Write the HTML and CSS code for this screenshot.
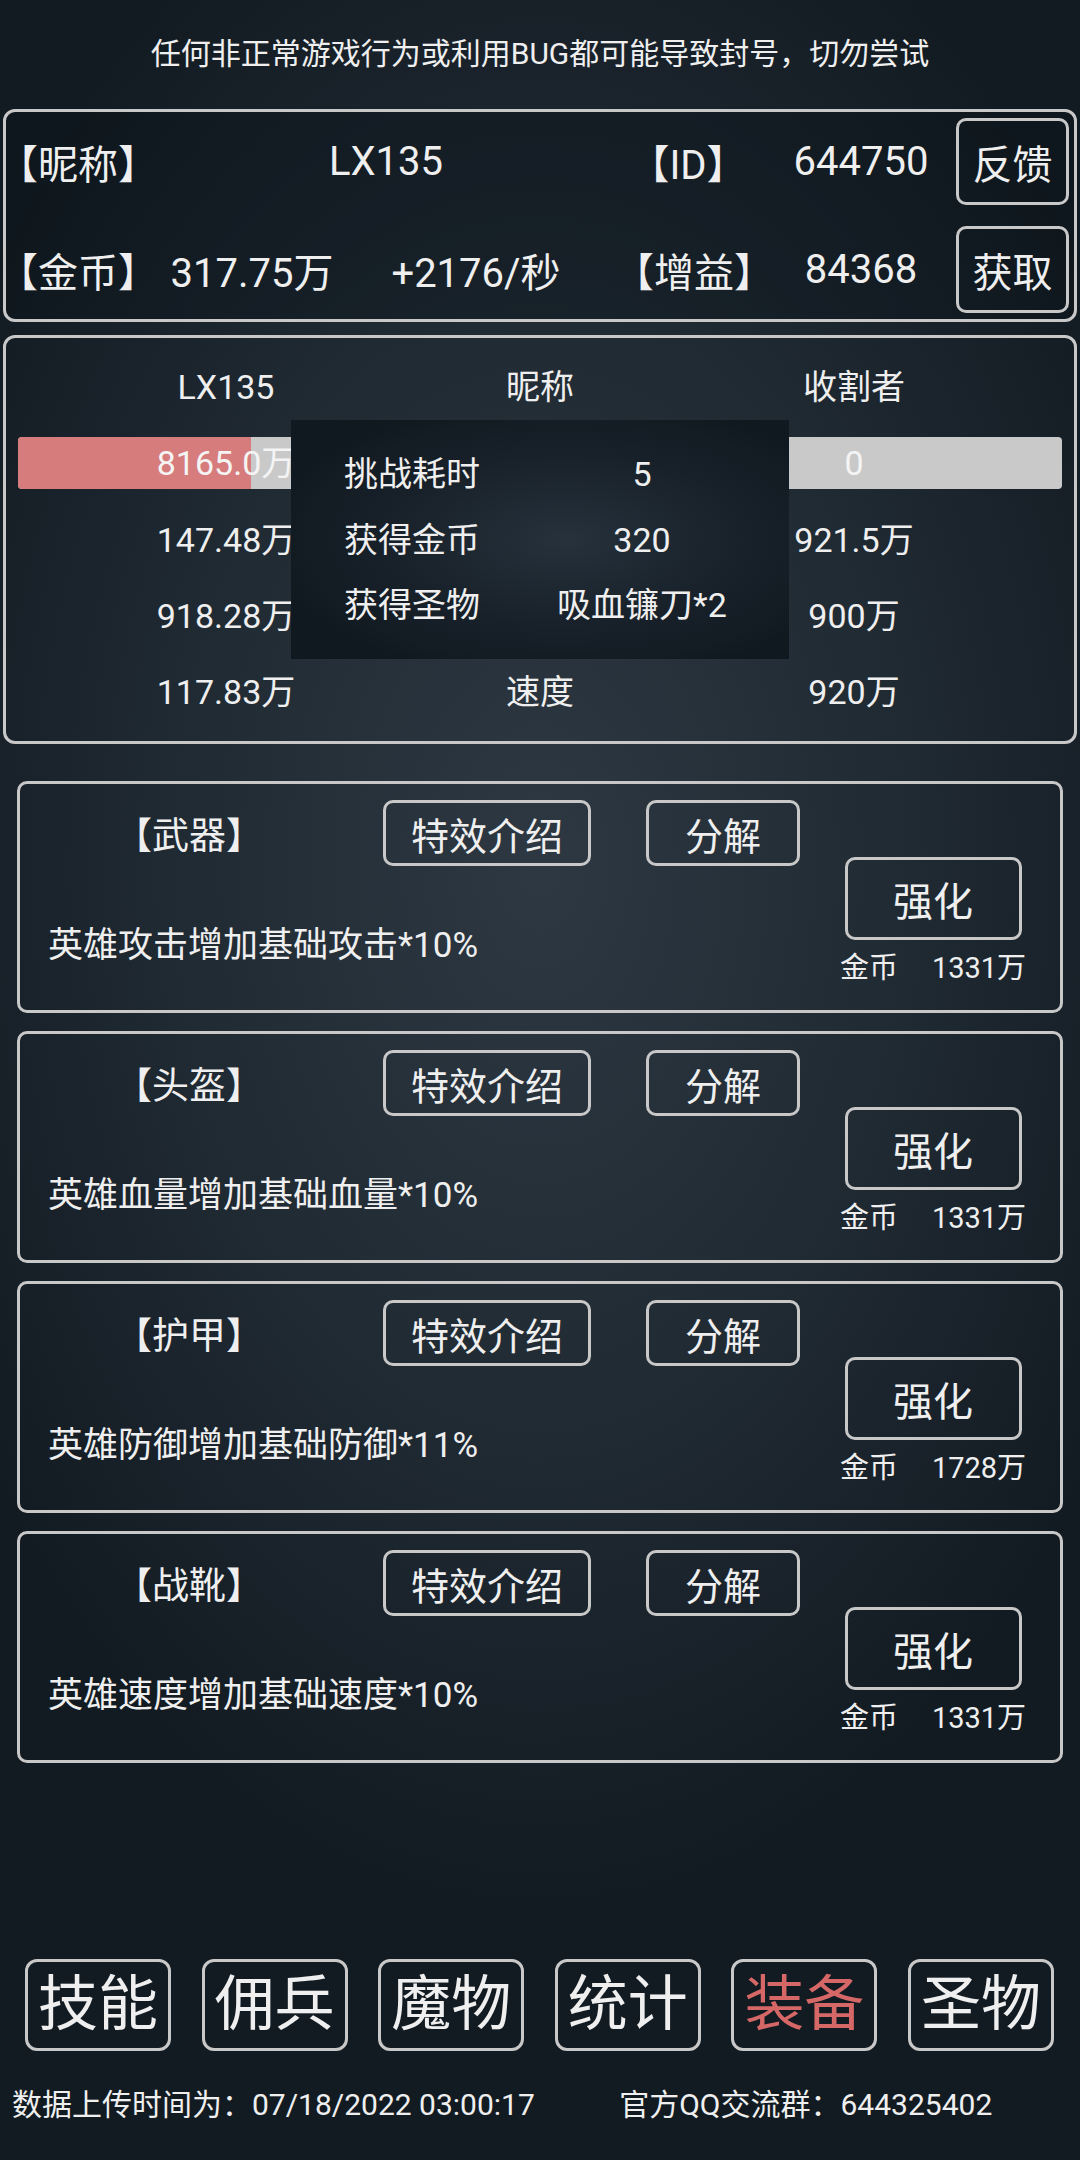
FILE: index.html
```html
<!DOCTYPE html>
<html lang="zh-CN">
<head>
  <meta charset="UTF-8" />
  <meta name="viewport" content="width=device-width, initial-scale=1" />
  <title>装备</title>
  <link rel="stylesheet" href="styles.css">
</head>
<body>
  <div class="notice">任何非正常游戏行为或利用BUG都可能导致封号，切勿尝试</div>

  <div class="panel info">
    <div class="info-row">
      <div class="cell c-label">【昵称】</div>
      <div class="cell c-name">LX135</div>
      <div class="cell c-idl">【ID】</div>
      <div class="cell c-id">644750</div>
      <button class="btn small-btn" type="button">反馈</button>
    </div>
    <div class="info-row">
      <div class="cell c-label">【金币】</div>
      <div class="cell c-gold">317.75万</div>
      <div class="cell c-rate">+2176/秒</div>
      <div class="cell c-buffl">【增益】</div>
      <div class="cell c-buff">84368</div>
      <button class="btn small-btn" type="button">获取</button>
    </div>
  </div>

  <div class="panel battle">
    <div class="battle-grid">
      <div class="b-head">LX135</div>
      <div class="b-head">昵称</div>
      <div class="b-head">收割者</div>

      <div class="hp-bar"><div class="hp-fill" style="width: 56%"></div><span>8165.0万</span></div>
      <div></div>
      <div class="hp-bar"><span>0</span></div>

      <div class="b-cell">147.48万</div>
      <div class="b-cell"></div>
      <div class="b-cell">921.5万</div>

      <div class="b-cell">918.28万</div>
      <div class="b-cell"></div>
      <div class="b-cell">900万</div>

      <div class="b-cell">117.83万</div>
      <div class="b-cell">速度</div>
      <div class="b-cell">920万</div>
    </div>

    <div class="result">
      <div class="r-label">挑战耗时</div><div class="r-value">5</div>
      <div class="r-label">获得金币</div><div class="r-value">320</div>
      <div class="r-label">获得圣物</div><div class="r-value">吸血镰刀*2</div>
    </div>
  </div>

  <div class="cards">
    <div class="card">
      <div class="card-main">
        <div class="card-head">
          <div class="card-title">【武器】</div>
          <button class="btn btn-intro" type="button">特效介绍</button>
          <button class="btn btn-split" type="button">分解</button>
        </div>
        <div class="card-desc">英雄攻击增加基础攻击*10%</div>
      </div>
      <div class="card-side">
        <button class="btn btn-up" type="button">强化</button>
        <div class="cost"><span>金币</span><span>1331万</span></div>
      </div>
    </div>

    <div class="card">
      <div class="card-main">
        <div class="card-head">
          <div class="card-title">【头盔】</div>
          <button class="btn btn-intro" type="button">特效介绍</button>
          <button class="btn btn-split" type="button">分解</button>
        </div>
        <div class="card-desc">英雄血量增加基础血量*10%</div>
      </div>
      <div class="card-side">
        <button class="btn btn-up" type="button">强化</button>
        <div class="cost"><span>金币</span><span>1331万</span></div>
      </div>
    </div>

    <div class="card">
      <div class="card-main">
        <div class="card-head">
          <div class="card-title">【护甲】</div>
          <button class="btn btn-intro" type="button">特效介绍</button>
          <button class="btn btn-split" type="button">分解</button>
        </div>
        <div class="card-desc">英雄防御增加基础防御*11%</div>
      </div>
      <div class="card-side">
        <button class="btn btn-up" type="button">强化</button>
        <div class="cost"><span>金币</span><span>1728万</span></div>
      </div>
    </div>

    <div class="card">
      <div class="card-main">
        <div class="card-head">
          <div class="card-title">【战靴】</div>
          <button class="btn btn-intro" type="button">特效介绍</button>
          <button class="btn btn-split" type="button">分解</button>
        </div>
        <div class="card-desc">英雄速度增加基础速度*10%</div>
      </div>
      <div class="card-side">
        <button class="btn btn-up" type="button">强化</button>
        <div class="cost"><span>金币</span><span>1331万</span></div>
      </div>
    </div>
  </div>

  <nav class="nav">
    <button class="btn nav-btn" type="button">技能</button>
    <button class="btn nav-btn" type="button">佣兵</button>
    <button class="btn nav-btn" type="button">魔物</button>
    <button class="btn nav-btn" type="button">统计</button>
    <button class="btn nav-btn active" type="button">装备</button>
    <button class="btn nav-btn" type="button">圣物</button>
  </nav>

  <div class="footer">
    <span>数据上传时间为：07/18/2022 03:00:17</span>
    <span class="qq">官方QQ交流群：644325402</span>
  </div>
</body>
</html>
```

FILE: styles.css
```css
* {
  box-sizing: border-box;
}

html, body {
  margin: 0;
  padding: 0;
}

body {
  width: 1080px;
  min-height: 2160px;
  font-family: Roboto, "Noto Sans CJK SC", sans-serif;
  color: #efefef;
  background: radial-gradient(ellipse 62% 48% at 50% 40%, #2d3842 0%, #202a33 55%, #131b22 100%);
  background-color: #131b22;
}

.notice {
  height: 109px;
  line-height: 108px;
  text-align: center;
  font-size: 30px;
}

.panel {
  margin: 0 3px;
  border: 3px solid #c8c8c8;
  border-radius: 12px;
}

.btn {
  font-family: inherit;
  color: #efefef;
  background: transparent;
  border: 3px solid #c8c8c8;
  border-radius: 10px;
  padding: 0;
  cursor: pointer;
}

/* top info */
.info {
  padding: 6px 5px 6px 0;
  display: flex;
  flex-direction: column;
  gap: 21px;
  background-color: rgba(10, 16, 22, 0.35);
}

.info-row {
  display: flex;
  align-items: center;
  height: 87px;
  font-size: 40px;
}

.cell {
  text-align: center;
  white-space: nowrap;
}

.c-label { width: 160px; text-align: left; margin-left: -8px; margin-right: 8px; }
.c-name { width: 440px; }
.c-idl { width: 164px; }
.c-id { width: 182px; }
.c-gold { width: 172px; }
.c-rate { width: 276px; }
.c-buffl { width: 154px; }
.c-buff { width: 186px; }

.small-btn {
  margin-left: auto;
  width: 113px;
  height: 87px;
  font-size: 40px;
}

/* battle */
.battle {
  position: relative;
  margin-top: 13px;
  height: 409px;
  padding: 24px 12px 0;
}

.battle-grid {
  display: grid;
  grid-template-columns: 416px 1fr 416px;
  font-size: 34px;
  text-align: center;
}

.b-head {
  line-height: 50px;
  margin-bottom: 25px;
}

.b-cell {
  line-height: 76px;
  height: 76px;
}

.hp-bar {
  position: relative;
  height: 52px;
  line-height: 52px;
  border-radius: 4px;
  background: #c9c9c9;
  overflow: hidden;
  margin-bottom: 13px;
}

.hp-fill {
  position: absolute;
  left: 0;
  top: 0;
  bottom: 0;
  background: #d77c7c;
}

.hp-bar span {
  position: relative;
  color: #f4f4f4;
}

.result {
  position: absolute;
  left: 285px;
  top: 82px;
  width: 498px;
  height: 239px;
  padding: 22px 0 0 53px;
  display: grid;
  grid-template-columns: 200px 196px;
  grid-auto-rows: 65.5px;
  align-content: start;
  font-size: 34px;
  line-height: 65.5px;
  background: radial-gradient(ellipse 60% 60% at 55% 50%, #26313b 0%, #18212a 60%, #111920 100%);
}

.r-value {
  text-align: center;
}

/* equipment cards */
.cards {
  margin: 37px 17px 0;
  display: flex;
  flex-direction: column;
  gap: 18px;
}

.card {
  height: 232px;
  border: 3px solid #c8c8c8;
  border-radius: 10px;
  padding: 16px 32px 0 28px;
  display: flex;
}

.card-main {
  flex: 1;
}

.card-head {
  display: flex;
  align-items: center;
  height: 66px;
}

.card-title {
  width: 282px;
  text-align: center;
  font-size: 37px;
}

.btn-intro {
  margin-left: 53px;
  width: 208px;
  height: 66px;
  font-size: 38px;
}

.btn-split {
  margin-left: 55px;
  width: 154px;
  height: 66px;
  font-size: 38px;
}

.card-desc {
  margin-top: 60px;
  line-height: 40px;
  font-size: 35px;
  white-space: nowrap;
}

.card-side {
  width: 190px;
  display: flex;
  flex-direction: column;
  align-items: center;
}

.btn-up {
  margin-top: 57px;
  width: 177px;
  height: 83px;
  font-size: 40px;
}

.cost {
  margin-top: 10px;
  line-height: 36px;
  font-size: 29px;
  display: flex;
  gap: 34px;
  white-space: nowrap;
}

/* bottom nav */
.nav {
  margin-top: 196px;
  padding: 0 26px 0 25px;
  display: flex;
  justify-content: space-between;
}

.nav-btn {
  width: 146px;
  height: 92px;
  border-radius: 12px;
  font-size: 60px;
  line-height: 80px;
}

.nav-btn.active {
  color: #d56767;
}

.footer {
  margin-top: 32px;
  padding-left: 12px;
  line-height: 44px;
  font-size: 30px;
  white-space: nowrap;
}

.qq {
  margin-left: 77px;
}
```
